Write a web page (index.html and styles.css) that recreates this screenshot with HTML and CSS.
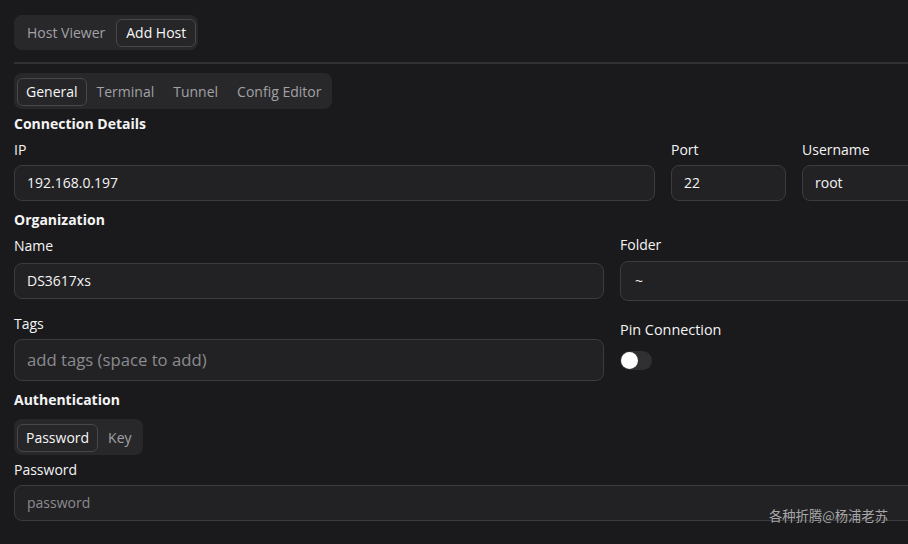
FILE: index.html
```html
<!DOCTYPE html>
<html lang="en">
<head>
<meta charset="utf-8">
<link rel="stylesheet" href="styles.css">
</head>
<body>
<div class="page">
  <div class="tabs top-tabs">
    <span class="tab">Host Viewer</span>
    <span class="tab active">Add Host</span>
  </div>
  <div class="divider"></div>
  <div class="tabs sub-tabs">
    <span class="tab active">General</span>
    <span class="tab">Terminal</span>
    <span class="tab">Tunnel</span>
    <span class="tab">Config Editor</span>
  </div>

  <h3 class="section">Connection Details</h3>
  <div class="conn-grid">
    <div class="field">
      <label class="label">IP</label>
      <div class="input">192.168.0.197</div>
    </div>
    <div class="field">
      <label class="label">Port</label>
      <div class="input">22</div>
    </div>
    <div class="field">
      <label class="label">Username</label>
      <div class="input">root</div>
    </div>
  </div>

  <h3 class="section">Organization</h3>
  <div class="org-grid">
    <div class="col">
      <label class="label name-label">Name</label>
      <div class="input">DS3617xs</div>
      <label class="label tags-label">Tags</label>
      <div class="input tags placeholder">add tags (space to add)</div>
    </div>
    <div class="col">
      <label class="label folder-label">Folder</label>
      <div class="input folder">~</div>
      <label class="label pin-label">Pin Connection</label>
      <span class="switch"><span class="knob"></span></span>
    </div>
  </div>

  <h3 class="section auth">Authentication</h3>
  <div class="tabs auth-tabs">
    <span class="tab active">Password</span>
    <span class="tab">Key</span>
  </div>
  <label class="label pw-label">Password</label>
  <div class="input wide placeholder">password</div>
</div>
<div class="watermark">各种折腾@杨浦老苏</div>
</body>
</html>
```
FILE: styles.css
```css
html, body {
  margin: 0;
  background: #1a1a1c;
  height: 100%;
  overflow: hidden;
}
body {
  font-family: "Open Sans", "Noto Sans", sans-serif;
  font-size: 14px;
  color: #f4f4f5;
  position: relative;
}
.page {
  padding: 15px 0 0 14px;
  width: 894px;
}
.tabs {
  display: inline-flex;
  align-items: center;
  background: #28282a;
  border-radius: 8px;
  padding: 4px 2px 3px 3px;
  gap: 1px;
}
.tab {
  height: 28px;
  line-height: 26px;
  padding: 0 9px;
  border: 1px solid transparent;
  border-radius: 6px;
  color: #a1a1a6;
  box-sizing: border-box;
  white-space: nowrap;
}
.tab.active {
  color: #f7f7f7;
  background: #262628;
  border-color: #48484c;
}
.top-tabs { height: 35px; box-sizing: border-box; }
.divider {
  height: 2px;
  background: #323235;
  margin: 12px 0 9px 0;
}
.sub-tabs { height: 36px; box-sizing: border-box; }
.sub-tabs .tab, .auth-tabs .tab { padding: 0 8px; }
.section {
  margin: 0;
  font-size: 14px;
  font-weight: 700;
  line-height: 20px;
  margin-top: 5px;
}
.label {
  display: block;
  line-height: 20px;
  margin: 6px 0 5px;
}
.input {
  box-sizing: border-box;
  height: 36px;
  line-height: 34px;
  border: 1px solid #3c3c3f;
  border-radius: 8px;
  background: #222224;
  padding: 0 12px;
  color: #f4f4f5;
  white-space: nowrap;
  overflow: hidden;
}
.placeholder { color: #8b8b90; }
.conn-grid {
  display: grid;
  grid-template-columns: 641px 115px 394px;
  column-gap: 16px;
  margin-bottom: 9px;
}
.org-grid {
  display: grid;
  grid-template-columns: 590px 590px;
  column-gap: 16px;
}
.col { display: flex; flex-direction: column; align-items: stretch; }
.name-label { margin-bottom: 7px; }
.folder-label { margin-top: 5px; margin-bottom: 6px; }
.folder { height: 40px; line-height: 38px; padding-left: 14px; }
.tags-label { margin-top: 15px; }
.tags { height: 42px; line-height: 40px; font-size: 16.7px; }
.pin-label { margin-top: 19px; margin-bottom: 11px; font-size: 14.4px; }
.switch {
  display: block;
  width: 32px;
  height: 19px;
  border-radius: 10px;
  background: #303033;
  position: relative;
}
.knob {
  position: absolute;
  left: 1px;
  top: 1px;
  width: 17px;
  height: 17px;
  border-radius: 50%;
  background: #ffffff;
}
.auth { margin-top: 9px; }
.auth-tabs { margin-top: 9px; height: 36px; box-sizing: border-box; }
.pw-label { margin-top: 5px; }
.wide { width: 1196px; }
.watermark {
  position: absolute;
  left: 769px;
  top: 506px;
  font-family: "Noto Sans CJK SC", sans-serif;
  font-size: 13.3px;
  color: #a6a6a8;
}
```
